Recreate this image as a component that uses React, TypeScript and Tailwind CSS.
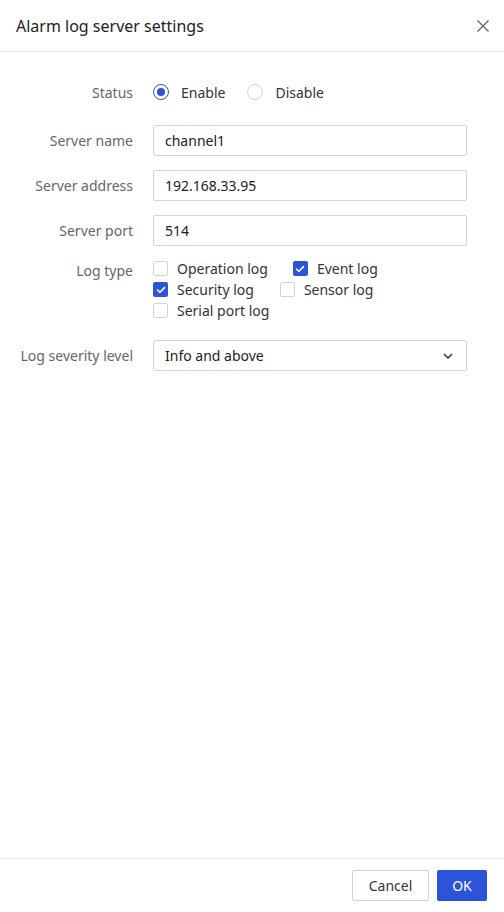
import React, { useState } from 'react';

const BLUE = 'bg-[#2b54d8]';

function Checkbox({ checked, label, onToggle }: { checked: boolean; label: string; onToggle: () => void }) {
  return (
    <label className="flex items-center cursor-pointer select-none" onClick={onToggle}>
      <span
        className={
          checked
            ? `flex items-center justify-center w-[15px] h-[15px] rounded-[2px] ${BLUE}`
            : 'flex items-center justify-center w-[15px] h-[15px] rounded-[2px] border border-[#d4d4d4] bg-white'
        }
      >
        {checked && (
          <svg width="10" height="8" viewBox="0 0 10 8" fill="none">
            <path d="M1.5 4 L4 6.3 L8.5 1.6" stroke="white" strokeWidth="1.6" strokeLinecap="round" strokeLinejoin="round" />
          </svg>
        )}
      </span>
      <span className="ml-[9px] text-[14px] text-[#333]">{label}</span>
    </label>
  );
}

function Radio({ checked, label, onSelect }: { checked: boolean; label: string; onSelect: () => void }) {
  return (
    <label className="flex items-center cursor-pointer select-none" onClick={onSelect}>
      <span
        className={
          checked
            ? 'flex items-center justify-center w-[16px] h-[16px] rounded-full border border-[#2b54d8] bg-white'
            : 'flex items-center justify-center w-[16px] h-[16px] rounded-full border border-[#d4d4d4] bg-white'
        }
      >
        {checked && <span className={`w-[8px] h-[8px] rounded-full ${BLUE}`} />}
      </span>
      <span className="ml-[12px] text-[14px] text-[#333]">{label}</span>
    </label>
  );
}

function Row({ label, children, top = false }: { label: string; children: React.ReactNode; top?: boolean }) {
  return (
    <div className={top ? 'flex items-start' : 'flex items-center'}>
      <div className={top ? 'w-[133px] text-right text-[14px] text-[#666] pt-[2px]' : 'w-[133px] text-right text-[14px] text-[#666]'}>
        {label}
      </div>
      <div className="ml-[20px] w-[314px]">{children}</div>
    </div>
  );
}

function TextInput({ value }: { value: string }) {
  return (
    <input
      defaultValue={value}
      className="w-full h-[31px] px-[11px] border border-[#d4d4d4] rounded-[2px] text-[14px] text-[#222] outline-none"
    />
  );
}

export default function App() {
  const [enabled, setEnabled] = useState(true);
  const [types, setTypes] = useState({ operation: false, event: true, security: true, sensor: false, serial: false });
  const toggle = (k: keyof typeof types) => setTypes({ ...types, [k]: !types[k] });

  return (
    <div className="w-[504px] h-[912px] bg-white flex flex-col font-['Noto_Sans',sans-serif]">
      <div className="h-[52px] flex items-center justify-between pl-[16px] pr-[14px] border-b border-[#e8e8e8] shrink-0">
        <div className="text-[16px] text-[#222]">Alarm log server settings</div>
        <button className="text-[#666]">
          <svg width="14" height="14" viewBox="0 0 14 14" fill="none">
            <path d="M1.5 1.5 L12.5 12.5 M12.5 1.5 L1.5 12.5" stroke="currentColor" strokeWidth="1.3" />
          </svg>
        </button>
      </div>

      <div className="flex-1 flex flex-col pt-[29px]">
        <Row label="Status">
          <div className="flex items-center h-[22px]">
            <Radio checked={enabled} label="Enable" onSelect={() => setEnabled(true)} />
            <div className="ml-[22px]">
              <Radio checked={!enabled} label="Disable" onSelect={() => setEnabled(false)} />
            </div>
          </div>
        </Row>

        <div className="mt-[22px] flex flex-col gap-[14px]">
          <Row label="Server name">
            <TextInput value="channel1" />
          </Row>
          <Row label="Server address">
            <TextInput value="192.168.33.95" />
          </Row>
          <Row label="Server port">
            <TextInput value="514" />
          </Row>
        </div>

        <div className="mt-[12px]">
          <Row label="Log type" top>
            <div className="flex flex-col leading-[21px]">
              <div className="flex items-center gap-[25px]">
                <Checkbox checked={types.operation} label="Operation log" onToggle={() => toggle('operation')} />
                <Checkbox checked={types.event} label="Event log" onToggle={() => toggle('event')} />
              </div>
              <div className="flex items-center gap-[26px]">
                <Checkbox checked={types.security} label="Security log" onToggle={() => toggle('security')} />
                <Checkbox checked={types.sensor} label="Sensor log" onToggle={() => toggle('sensor')} />
              </div>
              <div className="flex items-center">
                <Checkbox checked={types.serial} label="Serial port log" onToggle={() => toggle('serial')} />
              </div>
            </div>
          </Row>
        </div>

        <div className="mt-[19px]">
          <Row label="Log severity level">
            <div className="relative w-full h-[31px] px-[11px] border border-[#d4d4d4] rounded-[2px] flex items-center justify-between">
              <span className="text-[14px] text-[#222]">Info and above</span>
              <svg width="10" height="6" viewBox="0 0 10 6" fill="none" className="mr-[2px]">
                <path d="M1 1 L5 5 L9 1" stroke="#333" strokeWidth="1.5" />
              </svg>
            </div>
          </Row>
        </div>
      </div>

      <div className="h-[54px] border-t border-[#e8e8e8] flex items-center justify-end pr-[17px] gap-[8px] shrink-0">
        <button className="h-[31px] w-[77px] border border-[#d4d4d4] rounded-[2px] text-[14px] text-[#333] bg-white">
          Cancel
        </button>
        <button className={`h-[31px] w-[50px] rounded-[2px] text-[14px] text-white ${BLUE}`}>OK</button>
      </div>
    </div>
  );
}
